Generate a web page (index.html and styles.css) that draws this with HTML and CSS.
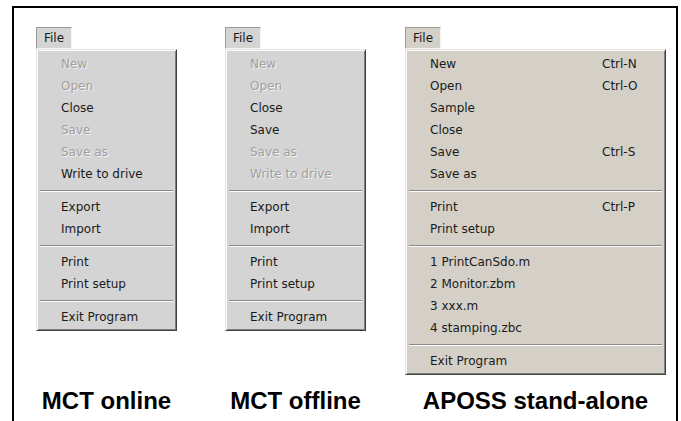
FILE: index.html
```html
<!DOCTYPE html>
<html>
<head>
<meta charset="utf-8">
<link rel="stylesheet" href="styles.css">
</head>
<body>
<div class="frame">
  <div class="panel">
    <div class="menubar"><span class="menubar__item">File</span></div>
    <ul class="menu">
      <li class="menu__item is-disabled"><span class="menu__label">New</span></li>
      <li class="menu__item is-disabled"><span class="menu__label">Open</span></li>
      <li class="menu__item"><span class="menu__label">Close</span></li>
      <li class="menu__item is-disabled"><span class="menu__label">Save</span></li>
      <li class="menu__item is-disabled"><span class="menu__label">Save as</span></li>
      <li class="menu__item"><span class="menu__label">Write to drive</span></li>
      <li class="menu__sep"></li>
      <li class="menu__item"><span class="menu__label">Export</span></li>
      <li class="menu__item"><span class="menu__label">Import</span></li>
      <li class="menu__sep"></li>
      <li class="menu__item"><span class="menu__label">Print</span></li>
      <li class="menu__item"><span class="menu__label">Print setup</span></li>
      <li class="menu__sep"></li>
      <li class="menu__item"><span class="menu__label">Exit Program</span></li>
    </ul>
    <div class="caption">MCT online</div>
  </div>
  <div class="panel panel--offline">
    <div class="menubar"><span class="menubar__item">File</span></div>
    <ul class="menu">
      <li class="menu__item is-disabled"><span class="menu__label">New</span></li>
      <li class="menu__item is-disabled"><span class="menu__label">Open</span></li>
      <li class="menu__item"><span class="menu__label">Close</span></li>
      <li class="menu__item"><span class="menu__label">Save</span></li>
      <li class="menu__item is-disabled"><span class="menu__label">Save as</span></li>
      <li class="menu__item is-disabled"><span class="menu__label">Write to drive</span></li>
      <li class="menu__sep"></li>
      <li class="menu__item"><span class="menu__label">Export</span></li>
      <li class="menu__item"><span class="menu__label">Import</span></li>
      <li class="menu__sep"></li>
      <li class="menu__item"><span class="menu__label">Print</span></li>
      <li class="menu__item"><span class="menu__label">Print setup</span></li>
      <li class="menu__sep"></li>
      <li class="menu__item"><span class="menu__label">Exit Program</span></li>
    </ul>
    <div class="caption">MCT offline</div>
  </div>
  <div class="panel panel--aposs">
    <div class="menubar menubar--beige"><span class="menubar__item">File</span></div>
    <ul class="menu menu--beige">
      <li class="menu__item"><span class="menu__label">New</span><span class="menu__key">Ctrl-N</span></li>
      <li class="menu__item"><span class="menu__label">Open</span><span class="menu__key">Ctrl-O</span></li>
      <li class="menu__item"><span class="menu__label">Sample</span></li>
      <li class="menu__item"><span class="menu__label">Close</span></li>
      <li class="menu__item"><span class="menu__label">Save</span><span class="menu__key">Ctrl-S</span></li>
      <li class="menu__item"><span class="menu__label">Save as</span></li>
      <li class="menu__sep"></li>
      <li class="menu__item"><span class="menu__label">Print</span><span class="menu__key">Ctrl-P</span></li>
      <li class="menu__item"><span class="menu__label">Print setup</span></li>
      <li class="menu__sep"></li>
      <li class="menu__item"><span class="menu__label">1 PrintCanSdo.m</span></li>
      <li class="menu__item"><span class="menu__label">2 Monitor.zbm</span></li>
      <li class="menu__item"><span class="menu__label">3 xxx.m</span></li>
      <li class="menu__item"><span class="menu__label">4 stamping.zbc</span></li>
      <li class="menu__sep"></li>
      <li class="menu__item"><span class="menu__label">Exit Program</span></li>
    </ul>
    <div class="caption">APOSS stand-alone</div>
  </div>
</div>
</body>
</html>
```
FILE: styles.css
```css
html, body {
  margin: 0;
  padding: 0;
  background: #fff;
}

.frame {
  box-sizing: border-box;
  margin: 6px 3px 0 12px;
  height: 415px;
  border: 2px solid #000;
  border-bottom: 0;
  padding: 19px 0 7px 22px;
  display: flex;
  align-items: stretch;
}

.panel {
  width: 141px;
  display: flex;
  flex-direction: column;
}

.panel--offline {
  margin-left: 48px;
}

.panel--aposs {
  width: 261px;
  margin-left: 39px;
}

.menubar {
  display: flex;
  font-family: "DejaVu Sans", Verdana, sans-serif;
  font-size: 12px;
  color: #1a1a1a;
}

.menubar__item {
  box-sizing: border-box;
  height: 22px;
  line-height: 21px;
  padding: 0 7px;
  background: #d4d4d4;
  border: 1px solid;
  border-color: #9a9a9a #f4f4f4 #f4f4f4 #9a9a9a;
}

.menubar--beige .menubar__item {
  background: #d4d0c8;
  border-color: #a09c94 #f4f4f4 #f4f4f4 #a09c94;
}

.menu {
  list-style: none;
  margin: 0;
  padding: 3px 2px 2px;
  background: #d4d4d4;
  border: 1px solid;
  border-color: #e6e6e6 #404040 #404040 #e6e6e6;
  box-shadow: inset 1px 1px 0 #fafafa, inset -1px -1px 0 #808080;
  font-family: "DejaVu Sans", Verdana, sans-serif;
  font-size: 12px;
  color: #1a1a1a;
}

.menu--beige {
  background: #d4d0c8;
  border-color: #e4e1da #404040 #404040 #e4e1da;
}

.menu__item {
  display: flex;
  height: 22px;
  line-height: 22px;
  padding-left: 22px;
  white-space: nowrap;
}

.menu__label {
  flex: 1;
}

.menu__key {
  width: 61px;
}

.menu__item.is-disabled {
  color: #a0a0a0;
  text-shadow: 1px 1px 0 #f2f2f2;
}

.menu__sep {
  margin: 5px 1px 4px;
  height: 0;
  border-top: 1px solid #8a8a8a;
  border-bottom: 1px solid #fafafa;
}

.caption {
  margin-top: auto;
  height: 26px;
  line-height: 26px;
  text-align: center;
  white-space: nowrap;
  font-family: "Liberation Sans", Arial, sans-serif;
  font-weight: bold;
  font-size: 24px;
  color: #000;
}
```
